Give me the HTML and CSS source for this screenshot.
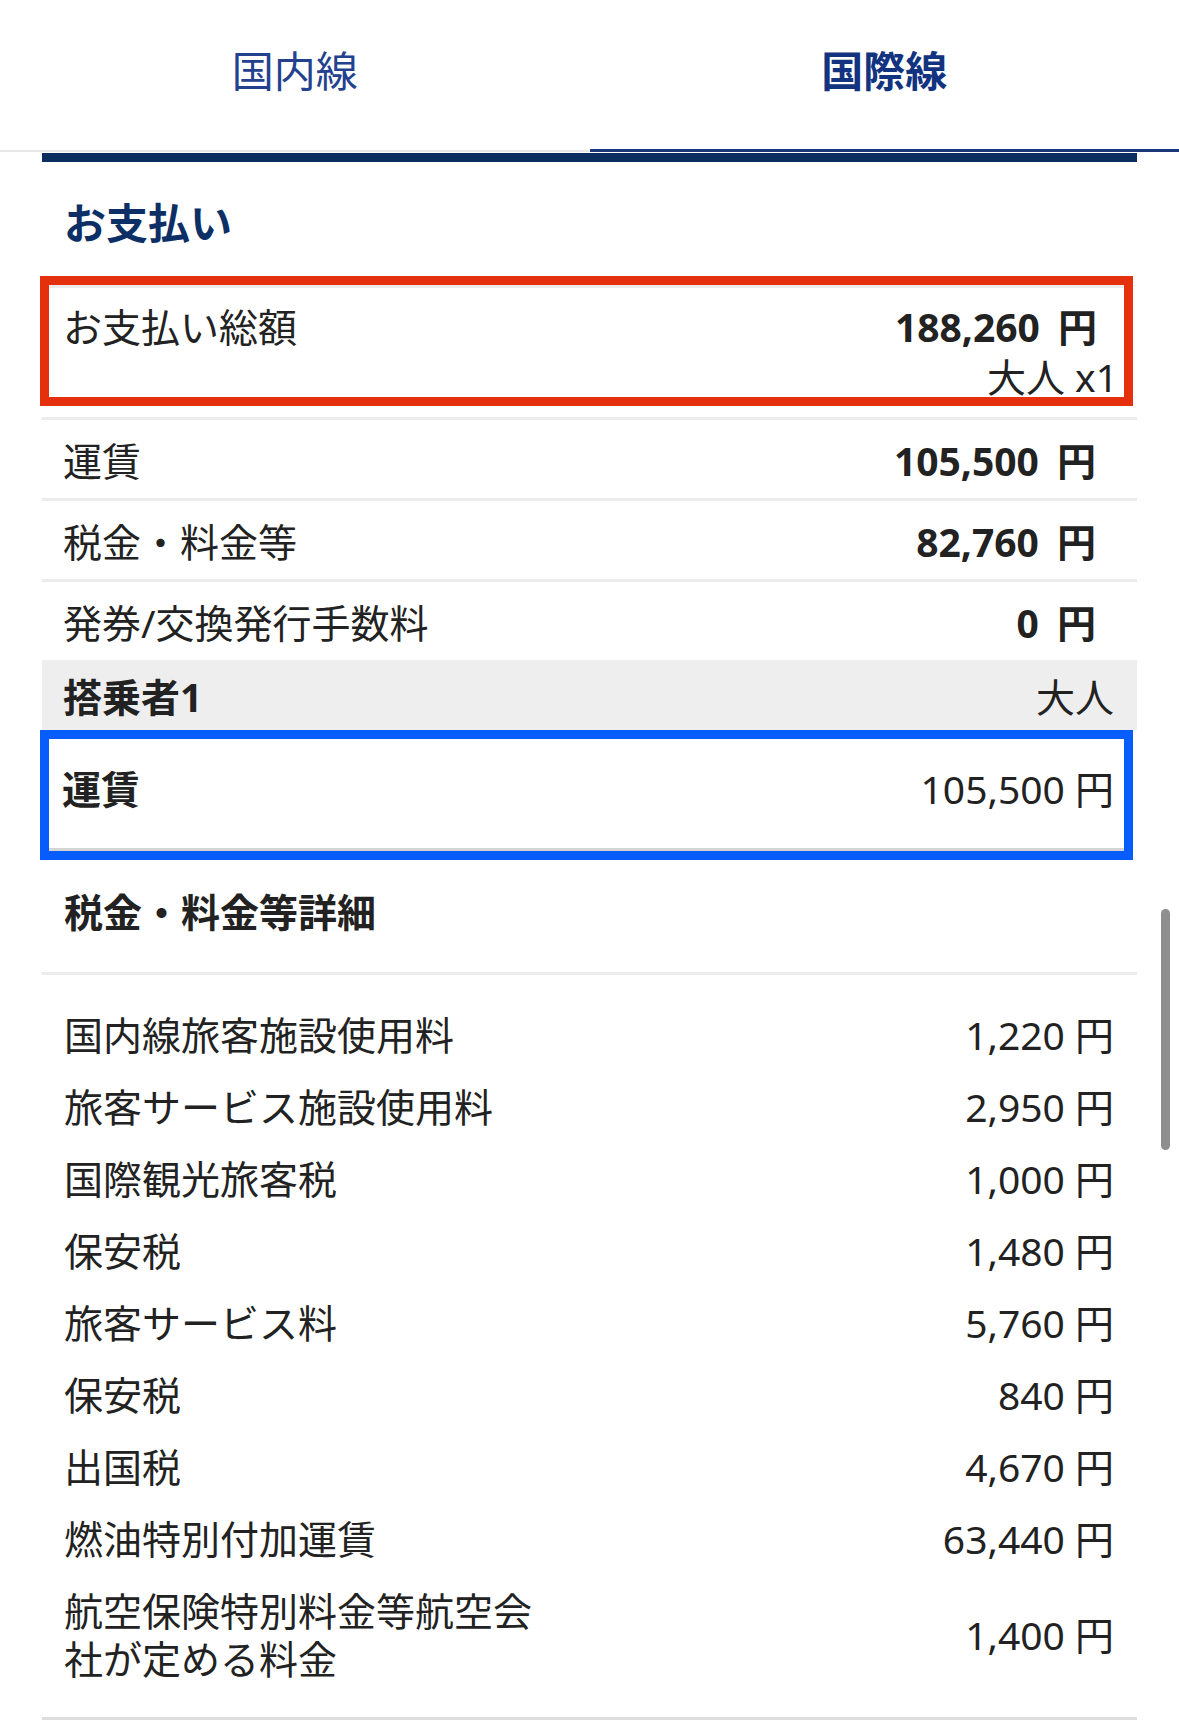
FILE: index.html
```html
<!DOCTYPE html>
<html lang="ja">
<head>
    <meta charset="UTF-8">
    <meta name="viewport" content="width=device-width, initial-scale=1.0">
    <title>お支払い</title>
    <link rel="stylesheet" href="styles.css">
</head>
<body>
    <nav class="tabs">
        <a href="#" class="tab">国内線</a>
        <a href="#" class="tab tab-active">国際線</a>
    </nav>

    <main class="payment">
        <h2 class="payment-title">お支払い</h2>

        <!-- お支払い総額 -->
        <div class="mark mark-red">
            <div class="row row-total">
                <span class="row-label">お支払い総額</span>
                <div class="total-amount">
                    <span class="price price-bold">188,260 <span class="yen">円</span></span>
                    <span class="pax">大人 x1</span>
                </div>
            </div>
        </div>

        <ul class="summary">
            <li class="row">
                <span class="row-label">運賃</span>
                <span class="price price-bold">105,500 <span class="yen">円</span></span>
            </li>
            <li class="row">
                <span class="row-label">税金・料金等</span>
                <span class="price price-bold">82,760 <span class="yen">円</span></span>
            </li>
            <li class="row">
                <span class="row-label">発券/交換発行手数料</span>
                <span class="price price-bold">0 <span class="yen">円</span></span>
            </li>
        </ul>

        <!-- 搭乗者ごとの内訳 -->
        <div class="passenger-head">
            <span class="passenger-name">搭乗者1</span>
            <span>大人</span>
        </div>
        <div class="mark mark-blue">
            <div class="fare-row">
                <span class="fare-label">運賃</span>
                <span class="price">105,500 円</span>
            </div>
        </div>

        <h3 class="detail-title">税金・料金等詳細</h3>
        <ul class="detail-list">
            <li class="detail-row"><span class="detail-label">国内線旅客施設使用料</span><span class="price">1,220 円</span></li>
            <li class="detail-row"><span class="detail-label">旅客サービス施設使用料</span><span class="price">2,950 円</span></li>
            <li class="detail-row"><span class="detail-label">国際観光旅客税</span><span class="price">1,000 円</span></li>
            <li class="detail-row"><span class="detail-label">保安税</span><span class="price">1,480 円</span></li>
            <li class="detail-row"><span class="detail-label">旅客サービス料</span><span class="price">5,760 円</span></li>
            <li class="detail-row"><span class="detail-label">保安税</span><span class="price">840 円</span></li>
            <li class="detail-row"><span class="detail-label">出国税</span><span class="price">4,670 円</span></li>
            <li class="detail-row"><span class="detail-label">燃油特別付加運賃</span><span class="price">63,440 円</span></li>
            <li class="detail-row"><span class="detail-label">航空保険特別料金等航空会社が定める料金</span><span class="price">1,400 円</span></li>
        </ul>
    </main>

    <div class="scroll-indicator"></div>
</body>
</html>
```

FILE: styles.css
```css
* {
    box-sizing: border-box;
}
body {
    margin: 0;
    position: relative;
    background: #fff;
    color: #222;
    font-family: "Noto Sans", "Noto Sans CJK JP", sans-serif;
    font-size: 39px;
}
ul {
    list-style: none;
    margin: 0;
    padding: 0;
}

/* タブ */
.tabs {
    display: flex;
    height: 152px;
}
.tab {
    flex: 1;
    text-align: center;
    padding-top: 46px;
    line-height: 50px;
    font-size: 42px;
    color: #24418f;
    text-decoration: none;
    border-bottom: 2px solid #e8e8e8;
}
.tab-active {
    font-weight: bold;
    color: #12337f;
    border-bottom: 3px solid #1b3878;
}

/* お支払い */
.payment {
    margin: 1px 42px 0;
    border-top: 9px solid #0b2d5f;
}
.payment-title {
    margin: 31px 0 23px;
    padding-left: 22px;
    font-size: 42px;
    line-height: 60px;
    font-weight: bold;
    color: #0c2f66;
}

/* 赤枠・青枠 */
.mark {
    margin: 0 4px 0 -2px;
    border: 9px solid #e5300e;
}
.mark-blue {
    border-color: #075dfb;
}

.row {
    display: flex;
    justify-content: space-between;
    align-items: center;
    padding: 0 41px 0 21px;
    height: 81px;
    border-top: 3px solid #ececec;
}
.row-total {
    align-items: flex-start;
    height: auto;
    padding: 19px 6px 0 14px;
    line-height: 40px;
}
.total-amount {
    display: flex;
    flex-direction: column;
    align-items: flex-end;
}
.total-amount .price {
    margin-right: 21px;
}
.pax {
    margin-top: 10px;
}
.summary {
    margin-top: 11px;
}
.price {
    white-space: nowrap;
}
.price-bold {
    font-weight: bold;
}
.price-bold .yen {
    margin-left: 8px;
}

/* 搭乗者 */
.passenger-head {
    display: flex;
    justify-content: space-between;
    align-items: center;
    height: 70px;
    padding: 0 23px 0 21px;
    background: #eeeeee;
}
.passenger-name {
    font-weight: bold;
}
.fare-row {
    display: flex;
    justify-content: space-between;
    padding: 0 10px 9px 13px;
    line-height: 100px;
    border-bottom: 3px solid #d4d4d4;
}
.fare-label {
    font-weight: bold;
}

/* 税金・料金等詳細 */
.detail-title {
    margin: 0;
    padding: 22px 22px 30px;
    font-size: 39px;
    line-height: 60px;
    font-weight: bold;
    border-bottom: 3px solid #ececec;
}
.detail-list {
    padding: 24px 23px 22px 22px;
    border-bottom: 3px solid #dedede;
}
.detail-row {
    display: flex;
    justify-content: space-between;
    align-items: center;
    padding: 12px 0;
    line-height: 48px;
}
.detail-label {
    max-width: 480px;
}

.scroll-indicator {
    position: absolute;
    top: 909px;
    left: 1161px;
    width: 9px;
    height: 241px;
    border-radius: 5px;
    background: #8e8e8e;
}
```
